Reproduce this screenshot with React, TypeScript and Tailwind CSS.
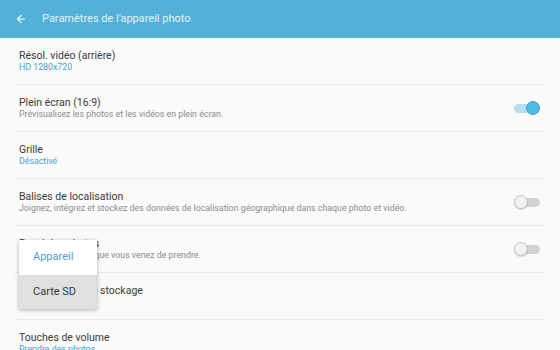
import { ArrowLeft } from "lucide-react";

type Row = {
  title: string;
  sub: string;
  blue?: boolean;
  toggle?: "on" | "off";
};

const rows: Row[] = [
  { title: "Résol. vidéo (arrière)", sub: "HD 1280x720", blue: true },
  { title: "Plein écran (16:9)", sub: "Prévisualisez les photos et les vidéos en plein écran.", toggle: "on" },
  { title: "Grille", sub: "Désactivé", blue: true },
  {
    title: "Balises de localisation",
    sub: "Joignez, intégrez et stockez des données de localisation géographique dans chaque photo et vidéo.",
    toggle: "off",
  },
  { title: "Revoir les photos", sub: "Afficher les photos que vous venez de prendre.", toggle: "off" },
  { title: "Emplacement de stockage", sub: "Appareil", blue: true },
  { title: "Touches de volume", sub: "Prendre des photos", blue: true },
];

function Toggle({ on }: { on: boolean }) {
  if (on) {
    return (
      <div className="flex items-center">
        <div className="h-[9px] w-[20px] rounded-full bg-[#b5dff0]" />
        <div className="-ml-[8px] h-[14px] w-[14px] rounded-full border border-[#3da5cf] bg-[#4dbbe4]" />
      </div>
    );
  }
  return (
    <div className="flex items-center">
      <div className="z-10 h-[14px] w-[14px] rounded-full border border-[#c4c4c4] bg-[#f2f2f2] shadow-[0_1px_1px_rgba(0,0,0,0.15)]" />
      <div className="-ml-[8px] h-[9px] w-[20px] rounded-full bg-[#d2d2d2]" />
    </div>
  );
}

export default function App() {
  return (
    <div className="relative h-[350px] w-[560px] overflow-hidden bg-[#fafafa] font-['Roboto',sans-serif]">
      <div className="flex h-[38px] items-center bg-[#53b0d6] pl-[15px]">
        <ArrowLeft size={12} strokeWidth={2.5} className="text-[#e8f5fb]" />
        <span className="ml-[15px] text-[11px] text-[#e3f2f9]">Paramètres de l'appareil photo</span>
      </div>

      <div className="px-[14px]">
        {rows.map((r) => (
          <div
            key={r.title}
            className="flex h-[47px] items-center border-b border-[#ebebeb] pl-[5px] pr-[6px]"
          >
            <div className="flex-1">
              <div className="text-[10.5px] leading-[13px] text-[#3c3c3c]">{r.title}</div>
              <div
                className={
                  r.blue
                    ? "text-[8.8px] leading-[11px] text-[#4aa3cf]"
                    : "text-[8.8px] leading-[11px] text-[#8c8c8c]"
                }
              >
                {r.sub}
              </div>
            </div>
            {r.toggle && <Toggle on={r.toggle === "on"} />}
          </div>
        ))}
      </div>

      <div className="absolute left-[19px] top-[240px] w-[78px] bg-white shadow-[0_1px_4px_rgba(0,0,0,0.3)]">
        <div className="flex h-[35px] items-center pl-[14px] text-[11px] text-[#4aa3cf]">Appareil</div>
        <div className="flex h-[34px] items-center bg-[#e0e0e0] pl-[14px] text-[11px] text-[#3a3a3a]">
          Carte SD
        </div>
      </div>
    </div>
  );
}
